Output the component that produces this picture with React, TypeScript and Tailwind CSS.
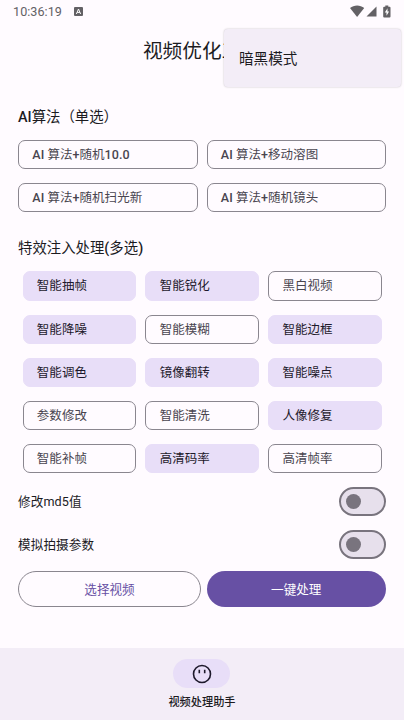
import { useState } from "react";
import clsx from "clsx";

const ALGORITHMS = ["AI 算法+随机10.0", "AI 算法+移动溶图", "AI 算法+随机扫光新", "AI 算法+随机镜头"];

const EFFECTS = [
  "智能抽帧", "智能锐化", "黑白视频",
  "智能降噪", "智能模糊", "智能边框",
  "智能调色", "镜像翻转", "智能噪点",
  "参数修改", "智能清洗", "人像修复",
  "智能补帧", "高清码率", "高清帧率",
];

const DEFAULT_EFFECTS = [
  "智能抽帧", "智能锐化", "智能降噪", "智能边框", "智能调色",
  "镜像翻转", "智能噪点", "人像修复", "高清码率",
];

// Latin runs are set in medium, Chinese stays regular
function Label({ text }: { text: string }) {
  return (
    <>
      {text.split(/([\x21-\x7e]+)/).map((part, i) =>
        i % 2 ? <span key={i} className="font-medium">{part}</span> : part
      )}
    </>
  );
}

function Chip({ label, selected, onClick }: { label: string; selected: boolean; onClick: () => void }) {
  return (
    <button
      onClick={onClick}
      className={clsx(
        "h-[29.2px] rounded-[7px] border pl-[13.3px] text-left text-[12.5px] leading-[27px] tracking-[0.05px] whitespace-nowrap",
        selected ? "border-[#e8def8] bg-[#e8def8] text-[#1d192b]" : "border-[#8a868f] text-[#49454f]"
      )}
    >
      <Label text={label} />
    </button>
  );
}

function SwitchRow({ label }: { label: string }) {
  const [on, setOn] = useState(false);

  return (
    <div className="flex h-[29px] items-center justify-between">
      <span className="pt-[2px] text-[12.6px] tracking-[0.1px] text-[#1c1b1f]">{label}</span>
      <button
        role="switch"
        aria-checked={on}
        onClick={() => setOn(!on)}
        className={clsx(
          "flex h-[29px] w-[47px] items-center rounded-full border-2 border-[#79747e] px-[5px]",
          on ? "justify-end bg-[#6750a4]" : "bg-[#e7e0ec]"
        )}
      >
        <span className={clsx("size-[15px] rounded-full", on ? "bg-white" : "bg-[#79747e]")} />
      </button>
    </div>
  );
}

function StatusBar() {
  return (
    <div className="flex h-6 items-center pt-px pr-[13px] pl-[13px] text-[#636165]">
      <span className="text-[12.6px] leading-none tracking-[0.05px]">10:36:19</span>
      <svg width="9" height="9" viewBox="0 0 9 9" className="mb-[2px] ml-[12px]">
        <rect width="9" height="9" rx="1" fill="#636165" />
        <path d="M2.4 7 4.5 2 6.6 7M3.2 5.4h2.6" fill="none" stroke="#fff" strokeWidth="1" />
      </svg>
      <svg width="41" height="13" viewBox="0 0 41 13" className="mb-[3px] ml-auto" fill="#636165">
        <path d="M0 3.1C4-.3 10.2-.3 14.2 3.1L7.1 12Z" />
        <path d="M26.5 1.4V11.6H16.5Z" />
        <path d="M35.3.6h3v1.2h1.3q.9 0 .9.9v8.8q0 .9-.9.9h-5.5q-.9 0-.9-.9V2.7q0-.9.9-.9h1.2Z" />
        <path d="M37.5 3.3 34.8 7.6h1.7v3.2l2.6-4.3h-1.6Z" fill="#fff" />
      </svg>
    </div>
  );
}

export default function App() {
  const [algorithm, setAlgorithm] = useState<string | null>(null);
  const [effects, setEffects] = useState<string[]>(DEFAULT_EFFECTS);

  const toggleEffect = (name: string) =>
    setEffects(effects.includes(name) ? effects.filter((e) => e !== name) : [...effects, name]);

  return (
    <div className="relative flex h-[720px] w-[404px] flex-col overflow-hidden bg-[#fffbff] font-[Roboto,'Noto_Sans_CJK_SC',sans-serif] text-[#1c1b1f]">
      <StatusBar />

      <header className="flex h-[56px] items-center justify-center pb-px">
        <h1 className="text-[19.7px] leading-none">视频优化工具</h1>
      </header>

      {/* Overflow menu */}
      <div className="absolute top-[29px] left-[224px] flex h-[58px] w-[177px] items-center rounded-[4px] bg-[#f3edf7] pt-[3px] pl-[15px] text-[14.6px] shadow-[0_0_2px_rgba(0,0,0,0.25)]">
        暗黑模式
      </div>

      <main className="flex flex-1 flex-col px-[18px] pt-[28px]">
        <h2 className="h-[32px] text-[14.4px] leading-[20px]">
          <Label text="AI算法（单选）" />
        </h2>
        <div className="grid grid-cols-2 gap-x-[9px] gap-y-[14px]">
          {ALGORITHMS.map((name) => (
            <Chip key={name} label={name} selected={algorithm === name} onClick={() => setAlgorithm(name)} />
          ))}
        </div>

        <h2 className="mt-[27px] h-[32px] text-[14.4px] leading-[20px]">
          <Label text="特效注入处理(多选)" />
        </h2>
        <div className="grid grid-cols-3 gap-x-[9px] gap-y-[14px] pr-[4px] pl-[4.5px]">
          {EFFECTS.map((name) => (
            <Chip key={name} label={name} selected={effects.includes(name)} onClick={() => toggleEffect(name)} />
          ))}
        </div>

        <div className="mt-[14px] flex flex-col gap-[14px]">
          <SwitchRow label="修改md5值" />
          <SwitchRow label="模拟拍摄参数" />
        </div>

        <div className="mt-[12px] flex gap-[5.5px] text-[12.6px]">
          <button className="h-[36px] w-[183px] rounded-full border border-[#8a868f] pt-[2px] text-[#6750a4]">选择视频</button>
          <button className="h-[36px] flex-1 rounded-full bg-[#6750a4] pt-[2px] text-white">一键处理</button>
        </div>
      </main>

      <nav className="flex h-[72px] flex-col items-center bg-[#f3edf7] pt-[11px]">
        <span className="mr-px flex h-[29px] w-[57px] items-center justify-center rounded-full bg-[#e8def8]">
          <svg width="20" height="20" viewBox="0 0 20 20" fill="none" stroke="#1d192b" strokeWidth="1.6">
            <circle cx="10" cy="10" r="8.5" />
            <path d="M7.3 5.8v3.4M12.7 5.8v3.4" />
          </svg>
        </span>
        <span className="mt-[7px] text-[11.2px] leading-[16px] font-medium">视频处理助手</span>
      </nav>
    </div>
  );
}
